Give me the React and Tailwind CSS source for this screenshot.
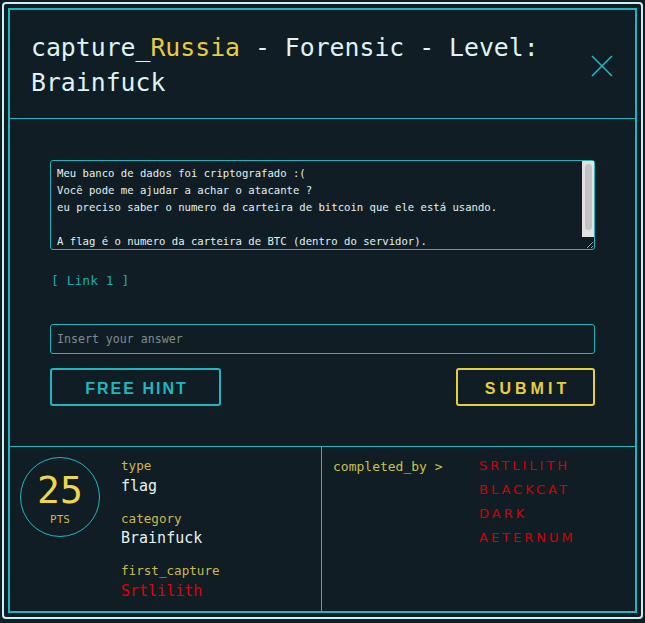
import React from "react";

const mono = { fontFamily: '"DejaVu Sans Mono", monospace' };
const sans = { fontFamily: '"Liberation Sans", Arial, sans-serif' };

export default function App() {
  const text =
    "Meu banco de dados foi criptografado :(\nVocê pode me ajudar a achar o atacante ?\neu preciso saber o numero da carteira de bitcoin que ele está usando.\n\nA flag é o numero da carteira de BTC (dentro do servidor).\n\n";
  return (
    <div className="w-[645px] h-[623px] bg-[#111d24] pt-[2px] px-[2px]" style={mono}>
      <div className="h-[617px] border-2 border-[#cdeef2] rounded-[4px] p-[4px]">
        <div className="h-full border-2 border-[#1fb6c1] flex flex-col">
          {/* header */}
          <div className="flex items-center justify-between pl-[21px] pr-[22px] h-[109px] border-b border-[#1fb6c1]">
            <h1 className="text-[24.8px] leading-[35px] text-[#dff3f4] pt-[2px]">
              capture_<span className="text-[#e6cb45]">Russia</span> - Forensic - Level:
              <br />
              Brainfuck
            </h1>
            <svg width="22" height="22" viewBox="0 0 22 22" className="mt-[4px]">
              <path d="M1 1 L21 21 M21 1 L1 21" stroke="#1fb6c1" strokeWidth="1.6" />
            </svg>
          </div>

          {/* body */}
          <div className="px-10 pt-[41px] pb-[40px] border-b border-[#1fb6c1] flex flex-col">
            <div className="relative h-[90px]">
              <textarea
                readOnly
                value={text}
                className="h-[90px] w-full bg-[#111d24] border border-[#1fb6c1] rounded-[3px] pl-[6px] pr-[16px] py-[4px] text-[10.6px] leading-[17px] text-[#e2f2f3] outline-none overflow-hidden block"
                style={mono}
              />
              <div className="absolute right-[1px] top-[1px] w-[12px] h-[76px] bg-[#e2e2e2] flex justify-center pt-[3px]">
                <div className="w-[7px] h-[66px] rounded-[4px] bg-[#c3c3c3]" />
              </div>
            </div>
            <a className="mt-[23px] text-[13px] leading-[16px] text-[#1ba9b6] pl-[1px]">[ Link 1 ]</a>
            <input
              placeholder="Insert your answer"
              className="mt-[35px] h-[30px] w-full bg-[#111d24] border border-[#1fb6c1] rounded-[3px] px-[6px] text-[11.6px] text-[#dceff1] placeholder:text-[#7f8c90] outline-none"
              style={mono}
            />
            <div className="mt-[14px] flex justify-between">
              <button
                className="w-[171px] h-[38px] border-2 border-[#1fb6c1] rounded-[3px] text-[#1fb6c1] text-[16px] font-bold tracking-[2px] pl-[2px] pt-[3px]"
                style={sans}
              >
                FREE HINT
              </button>
              <button
                className="w-[139px] h-[38px] border-2 border-[#e6cf3f] rounded-[3px] text-[#e6cf3f] text-[16px] font-bold tracking-[4px] pl-[4px] pt-[3px]"
                style={sans}
              >
                SUBMIT
              </button>
            </div>
          </div>

          {/* footer */}
          <div className="flex flex-1">
            <div className="w-[312px] border-r border-[#1fb6c1] flex pl-[10px] pt-[10px]">
              <div className="w-[80px] h-[80px] rounded-full border border-[#1fb6c1] flex flex-col items-center justify-center">
                <div className="text-[38px] leading-[38px] text-[#f0d64a] mt-[4px]">25</div>
                <div className="text-[11px] leading-[14px] text-[#cdb94d] mt-[4px]">PTS</div>
              </div>
              <div className="ml-[21px] flex flex-col">
                <div className="text-[12.6px] leading-[16px] text-[#cdb94d] mt-[1px]">type</div>
                <div className="text-[15px] leading-[20px] text-[#e3f4f5] mt-[2px]">flag</div>
                <div className="text-[12.6px] leading-[16px] text-[#cdb94d] mt-[15px]">category</div>
                <div className="text-[15px] leading-[20px] text-[#e3f4f5] mt-[1px]">Brainfuck</div>
                <div className="text-[12.6px] leading-[16px] text-[#cdb94d] mt-[15px]">first_capture</div>
                <div className="text-[15px] leading-[20px] text-[#e00000] mt-[2px]">Srtlilith</div>
              </div>
            </div>
            <div className="flex-1 flex pl-[11px] pt-[12px]">
              <div className="text-[13px] leading-[16px] text-[#c9c24a] w-[146px]">completed_by &gt;</div>
              <div
                className="flex flex-col text-[13px] leading-[16px] text-[#d40000] tracking-[3px] gap-[8px] mt-[-1px]"
                style={{ fontFamily: '"DejaVu Sans", sans-serif' }}
              >
                <span>SRTLILITH</span>
                <span>BLACKCAT</span>
                <span>DARK</span>
                <span>AETERNUM</span>
              </div>
            </div>
          </div>
        </div>
      </div>
    </div>
  );
}
